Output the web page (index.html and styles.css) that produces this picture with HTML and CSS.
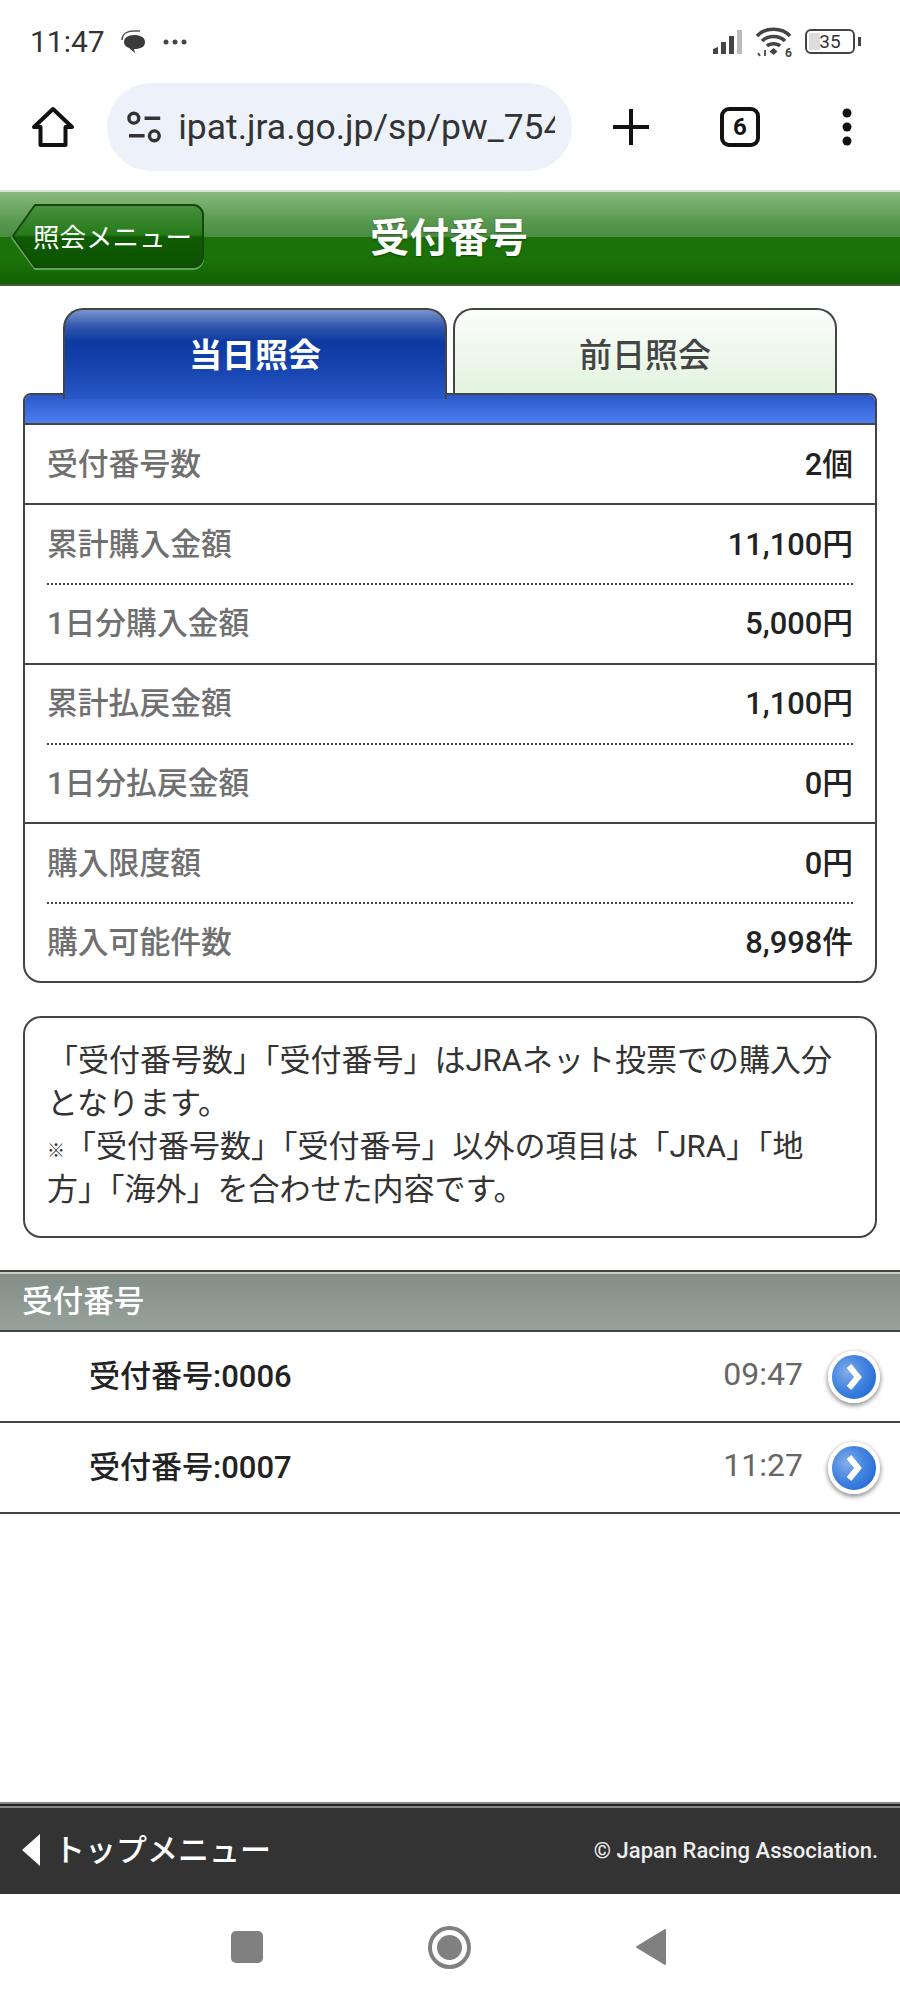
FILE: index.html
```html
<!DOCTYPE html>
<html lang="ja">
<head>
  <meta charset="UTF-8">
  <title>受付番号</title>
  <link rel="stylesheet" href="styles.css">
</head>
<body>
  <div class="status-bar">
    <div class="status-left">
      <span class="clock">11:47</span>
      <svg class="bubble" width="26" height="24" viewBox="0 0 26 24"><path d="M2 10C2 4 7 1 14 1h6" fill="none" stroke="#555" stroke-width="1.500"/><path d="M4 12c0-4 4-7 10-7s11 2 11 7-4 6-8 7l-3 0 1 4-6-5c-3-1-5-3-5-6z" fill="#3a3a3a"/></svg>
      <svg class="dots" width="26" height="8" viewBox="0 0 26 8" fill="#444"><circle cx="4" cy="4" r="2.500"/><circle cx="13" cy="4" r="2.500"/><circle cx="22" cy="4" r="2.500"/></svg>
    </div>
    <div class="status-right">
      <svg class="signal" width="32" height="26" viewBox="0 0 32 26"><path d="M1 20l5-2v7H1z" fill="#444"/><rect x="9" y="13" width="5" height="12" fill="#444"/><rect x="17" y="7" width="5" height="18" fill="#444"/><rect x="25" y="1" width="5" height="24" fill="#bbb"/></svg>
      <svg class="wifi" width="38" height="30" viewBox="0 0 38 30" fill="none" stroke="#444" stroke-width="3.600"><path d="M2 9C10 0 27 0 35 9"/><path d="M7 14c6-6 17-6 23 0"/><path d="M12 19c3-3 10-3 13 0"/><path d="M18.500 21l4 3.500-4 3.500-4-3.500z" fill="#444" stroke="none"/><path d="M10 23v6M3 26l2 3" stroke-width="1.800"/><text x="30" y="29.500" font-size="12" font-family="Roboto, sans-serif" font-weight="700" fill="#444" stroke="none">6</text></svg>
      <div class="battery"><div class="battery-fill"></div><span class="battery-num">35</span></div>
      <div class="battery-tip"></div>
    </div>
  </div>

  <div class="browser-bar">
    <svg class="home" width="44" height="44" viewBox="0 0 44 44" fill="none" stroke="#111" stroke-width="4" stroke-linejoin="round"><path d="M22 4L3 22h6.500v18h25V22H41z"/></svg>
    <div class="url-pill">
      <svg width="38" height="36" viewBox="0 0 38 36" fill="none" stroke="#333" stroke-width="3.500"><circle cx="8" cy="9" r="5"/><path d="M19 9h16M3 27h16"/><circle cx="29" cy="27" r="5"/></svg>
      <span class="url-text">ipat.jra.go.jp/sp/pw_754</span>
    </div>
    <svg class="plus" width="38" height="38" viewBox="0 0 38 38" stroke="#111" stroke-width="4"><path d="M19 1v36M1 19h36"/></svg>
    <div class="tab-count">6</div>
    <svg class="more" width="12" height="38" viewBox="0 0 12 38" fill="#111"><circle cx="6" cy="5" r="4.500"/><circle cx="6" cy="19" r="4.500"/><circle cx="6" cy="33" r="4.500"/></svg>
  </div>

  <header class="page-header">
    <a class="back-btn">
      <svg class="back-shape" width="194" height="68" viewBox="0 0 194 68">
        <defs>
          <linearGradient id="backFill" x1="0" y1="0" x2="0" y2="1">
            <stop offset="0" stop-color="#4a9040"/>
            <stop offset="0.48" stop-color="#257a18"/>
            <stop offset="0.52" stop-color="#0f5c02"/>
            <stop offset="1" stop-color="#0c5202"/>
          </linearGradient>
        </defs>
        <path d="M24 3H182a10 10 0 0 1 10 10V55a10 10 0 0 1-10 10H24L1 34z" fill="none" stroke="#5fa555" stroke-width="2"/>
        <path d="M24 1H182a10 10 0 0 1 10 10V53a10 10 0 0 1-10 10H24L2 32z" fill="url(#backFill)" stroke="#14480c" stroke-width="2"/>
      </svg>
      <span class="back-label">照会メニュー</span>
    </a>
    <h1>受付番号</h1>
  </header>

  <div class="tabs">
    <div class="tab tab-active">当日照会</div>
    <div class="tab tab-idle">前日照会</div>
  </div>

  <div class="panel">
    <div class="panel-strip"></div>
    <div class="group">
      <div class="row"><span class="label">受付番号数</span><span class="value">2個</span></div>
    </div>
    <div class="group">
      <div class="row"><span class="label">累計購入金額</span><span class="value">11,100円</span></div>
      <div class="row"><span class="label">1日分購入金額</span><span class="value">5,000円</span></div>
    </div>
    <div class="group">
      <div class="row"><span class="label">累計払戻金額</span><span class="value">1,100円</span></div>
      <div class="row"><span class="label">1日分払戻金額</span><span class="value">0円</span></div>
    </div>
    <div class="group">
      <div class="row"><span class="label">購入限度額</span><span class="value">0円</span></div>
      <div class="row"><span class="label">購入可能件数</span><span class="value">8,998件</span></div>
    </div>
  </div>

  <div class="note">
    「受付番号数」「受付番号」はJRAネット投票での購入分となります。<br>
    <span class="kome">※</span>「受付番号数」「受付番号」以外の項目は「JRA」「地方」「海外」を合わせた内容です。
  </div>

  <h2 class="section-title">受付番号</h2>
  <div class="list-item">
    <span class="item-name">受付番号:0006</span>
    <span class="item-time">09:47</span>
    <span class="arrow-btn"><svg width="18" height="28" viewBox="0 0 18 28" fill="none" stroke="#fff" stroke-width="6"><path d="M4 3l9 11-9 11"/></svg></span>
  </div>
  <div class="list-item">
    <span class="item-name">受付番号:0007</span>
    <span class="item-time">11:27</span>
    <span class="arrow-btn"><svg width="18" height="28" viewBox="0 0 18 28" fill="none" stroke="#fff" stroke-width="6"><path d="M4 3l9 11-9 11"/></svg></span>
  </div>

  <div class="spacer"></div>

  <footer class="page-footer">
    <a class="top-link"><span class="top-arrow"></span><span class="top-label">トップメニュー</span></a>
    <span class="copyright">© Japan Racing Association.</span>
  </footer>

  <div class="nav-bar">
    <div class="nav-square"></div>
    <div class="nav-circle"><div class="nav-dot"></div></div>
    <svg width="32" height="38" viewBox="0 0 32 38"><path d="M30 2v34L2 19z" fill="#808080" stroke="#808080" stroke-width="2" stroke-linejoin="round"/></svg>
  </div>
</body>
</html>
```

FILE: styles.css
```css
* {
  box-sizing: border-box;
}

body {
  margin: 0;
  width: 900px;
  min-height: 2000px;
  display: flex;
  flex-direction: column;
  background-color: #fff;
  font-family: Roboto, 'Noto Sans CJK JP', sans-serif;
  color: #222;
}

/* phone status bar */
.status-bar {
  height: 83px;
  padding: 0 39px 0 30px;
  display: flex;
  justify-content: space-between;
  align-items: center;
}

.status-left, .status-right {
  display: flex;
  align-items: center;
}

.clock {
  font-size: 30px;
  color: #333;
}

.bubble {
  margin-left: 15px;
}

.dots {
  margin-left: 16px;
}

.signal {
  margin-right: 11px;
}

.wifi {
  margin-right: 12px;
}

.battery {
  position: relative;
  width: 50px;
  height: 25px;
  border: 2px solid #444;
  border-radius: 6px;
  display: flex;
  justify-content: center;
  align-items: center;
  overflow: hidden;
}

.battery-fill {
  position: absolute;
  left: 2px;
  top: 2px;
  bottom: 2px;
  width: 11px;
  background-color: #ddd;
}

.battery-num {
  position: relative;
  font-size: 19px;
  line-height: 20px;
  color: #333;
}

.battery-tip {
  width: 3px;
  height: 9px;
  margin-left: 3px;
  background-color: #444;
}

/* browser toolbar */
.browser-bar {
  height: 107px;
  padding-bottom: 19px;
  display: flex;
  align-items: center;
}

.home {
  margin-left: 31px;
}

.url-pill {
  width: 465px;
  height: 88px;
  margin-left: 32px;
  padding: 0 17px 0 19px;
  background-color: #edf2fa;
  border-radius: 44px;
  display: flex;
  align-items: center;
}

.url-text {
  margin-left: 15px;
  font-size: 35.500px;
  color: #333;
  white-space: nowrap;
  overflow: hidden;
}

.plus {
  margin-left: 40px;
}

.tab-count {
  width: 40px;
  height: 40px;
  margin-left: 70px;
  border: 4px solid #111;
  border-radius: 9px;
  display: flex;
  justify-content: center;
  align-items: center;
  font-weight: bold;
  font-size: 24px;
  color: #111;
}

.more {
  margin-left: 81px;
}

/* green title bar */
.page-header {
  position: relative;
  height: 96px;
  padding-bottom: 8px;
  display: flex;
  justify-content: center;
  align-items: center;
  border-top: 2px solid #d8e8d8;
  border-bottom: 2px solid #40603a;
  background: linear-gradient(#8aba80 0%, #5a9a50 30%, #4a8c42 49%, #1a7208 49%, #1a7208 75%, #146004 100%);
}

.page-header h1 {
  margin: 0 2px 0 0;
  font-size: 39.500px;
  font-weight: 700;
  color: #fff;
  text-shadow: 0 1px 2px rgba(0, 0, 0, 0.4);
}

.back-btn {
  position: absolute;
  left: 11px;
  top: 12px;
  width: 194px;
  height: 68px;
  padding-bottom: 6px;
  display: flex;
  align-items: center;
}

.back-shape {
  position: absolute;
  left: 0;
  top: 0;
}

.back-label {
  position: relative;
  margin-left: 22px;
  font-size: 26.500px;
  color: #fff;
}

/* tabs */
.tabs {
  height: 85px;
  margin-top: 22px;
  padding-left: 63px;
  display: flex;
  gap: 6px;
}

.tab {
  width: 384px;
  padding-top: 2px;
  border: 2px solid #444;
  border-bottom: none;
  border-radius: 20px 20px 0 0;
  display: flex;
  justify-content: center;
  align-items: center;
  font-size: 33px;
  font-weight: 500;
}

.tab-active {
  height: 91px;
  position: relative;
  z-index: 1;
  padding-top: 0;
  padding-bottom: 4px;
  color: #fff;
  font-weight: 700;
  background: linear-gradient(#7c93cc 0%, #3258ae 18%, #0d3aa0 36%, #1544ae 65%, #2a58c8 100%);
}

.tab-idle {
  color: #444;
  background: linear-gradient(#fbfdfb, #e2f3de);
}

/* result panel */
.panel {
  width: 854px;
  height: 590px;
  margin-left: 23px;
  border: 2px solid #444;
  border-radius: 8px 8px 18px 18px;
  overflow: hidden;
}

.panel-strip {
  height: 30px;
  border-bottom: 2px solid #444;
  background: linear-gradient(#2a58c8, #4c7ef0);
}

.group {
  border-bottom: 2px solid #444;
}

.group:last-child {
  border-bottom: none;
}

.row {
  height: 78px;
  margin: 0 22px;
  padding-bottom: 6px;
  display: flex;
  justify-content: space-between;
  align-items: center;
  font-size: 30.800px;
}

.row + .row {
  height: 79.500px;
  border-top: 2px dotted #444;
}

.label {
  font-weight: 500;
  color: #707070;
}

.value {
  font-weight: 500;
  color: #222;
}

/* note box */
.note {
  width: 854px;
  height: 222px;
  margin: 33px 0 0 23px;
  padding: 21px 34px 0 22px;
  border: 2px solid #444;
  border-radius: 18px;
  font-size: 31px;
  line-height: 43px;
  color: #333;
}

.kome {
  display: inline-block;
  width: 18px;
  font-size: 18px;
  line-height: 20px;
}

/* list */
.section-title {
  height: 62px;
  margin: 32px 0 0;
  padding: 0 0 5px 22px;
  display: flex;
  align-items: center;
  border-top: 2px solid #444;
  border-bottom: 2px solid #444;
  box-shadow: inset 0 2px 0 #c8cec8;
  font-size: 30.600px;
  font-weight: 500;
  color: #fff;
  background: linear-gradient(#838d87, #98a29c);
}

.list-item {
  height: 91px;
  padding: 0 20px 0 89px;
  display: flex;
  align-items: center;
  border-bottom: 2px solid #444;
}

.item-name {
  flex: 1;
  padding-bottom: 7px;
  font-size: 31px;
  font-weight: 500;
  color: #222;
}

.item-time {
  padding-bottom: 5px;
  font-size: 32px;
  color: #666;
}

.arrow-btn {
  width: 52px;
  height: 52px;
  margin-left: 25px;
  border: 4px solid #fff;
  border-radius: 50%;
  display: flex;
  justify-content: center;
  align-items: center;
  background: radial-gradient(circle at 35% 38%, #86aeea, #4384e0 45%, #2a6fd8 75%);
  box-shadow: 0 2px 4px 1px rgba(0, 0, 0, 0.4);
}

.arrow-btn svg {
  width: 18px;
  height: 28px;
}

.spacer {
  flex: 1;
}

/* footer */
.page-footer {
  height: 90px;
  padding: 0 22px;
  display: flex;
  justify-content: space-between;
  align-items: center;
  background-color: #333;
  border-top: 2px solid #222;
  box-shadow: 0 -2px 0 #888, inset 0 2px 0 #888;
  color: #fff;
}

.top-link {
  display: flex;
  align-items: center;
  font-size: 31px;
  font-weight: 500;
}

.top-label {
  padding-bottom: 6px;
}

.top-arrow {
  width: 0;
  height: 0;
  margin-right: 14px;
  border-top: 16px solid transparent;
  border-bottom: 16px solid transparent;
  border-right: 18px solid #fff;
}

.copyright {
  font-size: 22px;
  font-weight: 500;
  color: #eee;
}

/* android nav */
.nav-bar {
  height: 106px;
  padding: 0 233px 0 231px;
  display: flex;
  justify-content: space-between;
  align-items: center;
}

.nav-square {
  width: 32px;
  height: 32px;
  background-color: #808080;
  border-radius: 5px;
}

.nav-circle {
  width: 43px;
  height: 43px;
  border: 4px solid #808080;
  border-radius: 50%;
  display: flex;
  justify-content: center;
  align-items: center;
}

.nav-dot {
  width: 25px;
  height: 25px;
  border-radius: 50%;
  background-color: #808080;
}
```
